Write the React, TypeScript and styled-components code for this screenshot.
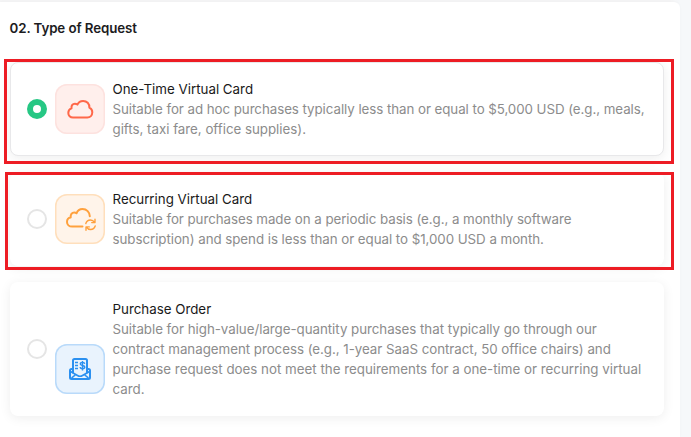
import React from "react";
import styled, { createGlobalStyle, css } from "styled-components";

const GlobalStyle = createGlobalStyle`
  * { box-sizing: border-box; }
  body {
    margin: 0;
    background: #f6f7fa;
    font-family: Inter, "Liberation Sans", sans-serif;
    overflow: hidden;
  }
`;

const Page = styled.div`
  height: 437px;
  padding: 2px 11px 0 0;
  background: linear-gradient(to right, #f4f4f5 0 670px, #f6f8fa 680px);
`;

const Panel = styled.main`
  height: 435px;
  padding: 16px 16px 0 9.5px;
  background: #fff;
  border-top-right-radius: 6px;
  box-shadow: 0 0 3px rgba(0, 0, 0, 0.03);
`;

const Heading = styled.h2`
  margin: 0 0 24px;
  font-size: 13.33px;
  line-height: 20px;
  font-weight: 600;
  letter-spacing: -0.1px;
  color: #1c1c1e;
`;

const Options = styled.div`
  display: flex;
  flex-direction: column;
  gap: 16px;
  margin-left: 0.5px;
`;

const Card = styled.label<{ $selected?: boolean }>`
  position: relative;
  display: flex;
  align-items: center;
  padding: 16px;
  border: 1px solid ${(p) => (p.$selected ? "#e8e8ea" : "transparent")};
  border-radius: 8px;
  background: #fff;
  box-shadow: 0 2px 12px rgba(0, 0, 0, 0.07);
`;

const Radio = styled.span<{ $selected?: boolean }>`
  flex: none;
  width: 20px;
  height: 20px;
  border-radius: 50%;
  background: #fff;
  border: 2px solid #e5e5e5;
  ${(p) => p.$selected && css`border: 6px solid #26c784;`}
`;

type Tone = "red" | "orange" | "blue";
const tones = {
  red: { bg: "#ffefec", border: "#fde2df", ink: "#ff6849" },
  orange: { bg: "#fff4ea", border: "#ffdfbc", ink: "#ffa13d" },
  blue: { bg: "#e9f3fd", border: "#b9dafa", ink: "#2b90f0" },
};

const Tile = styled.span<{ $tone: Tone; $low?: boolean }>`
  flex: none;
  width: 50px;
  height: 50px;
  margin: ${(p) => (p.$low ? "40px" : "0")} 7.5px 0 8px;
  border-radius: 12px;
  background: ${(p) => tones[p.$tone].bg};
  box-shadow: inset 0 0 0 1.5px ${(p) => tones[p.$tone].border};
  color: ${(p) => tones[p.$tone].ink};
  svg {
    display: block;
    fill: none;
    stroke: currentColor;
    stroke-width: 2;
    stroke-linecap: round;
    stroke-linejoin: round;
  }
`;

const Copy = styled.span`
  font-size: 13.33px;
  line-height: 20px;
  white-space: nowrap;
`;

const Title = styled.span`
  display: block;
  color: #1a1a1a;
`;

const Line = styled.span<{ $tracking: number }>`
  display: block;
  letter-spacing: ${(p) => p.$tracking}px;
  color: #8c8c8c;
`;

const Highlight = styled.span<{ $inset: string }>`
  position: absolute;
  inset: ${(p) => p.$inset};
  border: 3px solid #ed1c24;
  pointer-events: none;
`;

const CloudIcon = () => (
  <svg width="50" height="50" viewBox="0 0 50 50">
    <path d="M18 33.5c-2.800 0-4.700-2-4.700-4.600 0-2.200 1.200-3.900 3.200-4.500-.3-2.900 1.200-4.700 3.400-4.700 1 0 1.800.3 2.500.9 1-2.300 3.100-3.700 5.700-3.700 3.800 0 6.400 2.800 6.300 6.800 1.700.9 2.900 2.500 2.900 4.600 0 3-2.100 5.200-5 5.200z" />
  </svg>
);

const CloudSyncIcon = () => (
  <svg width="50" height="50" viewBox="0 0 50 50">
    <path d="M27.500 32.500H17.200c-3.100 0-5.200-2-5.200-4.600 0-2.500 1.500-4.200 3.700-4.500-.4-2.800 1.200-4.900 3.500-4.900.9 0 1.700.3 2.300.8 1-2.600 3.100-4.200 6-4.200 4.200 0 7.200 3.100 7.300 7.200" />
    <g strokeWidth="1.4">
      <path d="M30.800 29.500c.7-2.100 2.400-3.500 4.600-3.500 1.700 0 3.200.9 4.100 2.400M40 25.300v3.300h-3.300" />
      <path d="M40.200 32c-.7 2.100-2.400 3.500-4.600 3.500-1.700 0-3.200-.9-4.100-2.400M31 36.200v-3.300h3.300" />
    </g>
  </svg>
);

const InvoiceIcon = () => (
  <svg width="50" height="50" viewBox="0 0 50 50">
    <path d="M18 28.500v-12q0-1.500 1.500-1.500h11q1.500 0 1.500 1.500V28.500M18 25h-1.500q-1.500 0-1.500 1.500v7q0 1.500 1.500 1.500h17q1.500 0 1.500-1.500v-7q0-1.500-1.500-1.500H32" />
    <path strokeWidth="1.6" d="M15.500 27.500l7 4q2.500 1.500 5 0l7-4M17 33.700l3.200-2.700M33 33.700l-3.200-2.700" />
    <g strokeWidth="1.4" strokeLinecap="butt">
      <path d="M20 18.500h3M20 21.500h3M20 24.500h3" />
      <path d="M29.700 19.900c-.1-1-.9-1.500-2.200-1.500-1.300 0-2.200.6-2.200 1.600 0 2.100 4.500.9 4.500 3.100 0 1-.9 1.600-2.300 1.600s-2.300-.6-2.300-1.600M27.500 17v9.500" />
    </g>
  </svg>
);

interface Option {
  title: string;
  lines: [text: string, tracking: number][];
  tone: Tone;
  Icon: React.FC;
  selected?: boolean;
  low?: boolean;
  highlight?: string;
}

const options: Option[] = [
  {
    title: "One-Time Virtual Card",
    lines: [
      ["Suitable for ad hoc purchases typically less than or equal to $5,000 USD (e.g., meals,", -0.06],
      ["gifts, taxi fare, office supplies).", -0.02],
    ],
    tone: "red",
    Icon: CloudIcon,
    selected: true,
    highlight: "-4px -11px -9px -7px",
  },
  {
    title: "Recurring Virtual Card",
    lines: [
      ["Suitable for purchases made on a periodic basis (e.g., a monthly software", -0.06],
      ["subscription) and spend is less than or equal to $1,000 USD a month.", -0.05],
    ],
    tone: "orange",
    Icon: CloudSyncIcon,
    highlight: "-1px -11px -5px -6px",
  },
  {
    title: "Purchase Order",
    lines: [
      ["Suitable for high-value/large-quantity purchases that typically go through our", -0.04],
      ["contract management process (e.g., 1-year SaaS contract, 50 office chairs) and", -0.035],
      ["purchase request does not meet the requirements for a one-time or recurring virtual", 0],
      ["card.", 0],
    ],
    tone: "blue",
    Icon: InvoiceIcon,
    low: true,
  },
];

export default function App() {
  return (
    <Page>
      <GlobalStyle />
      <Panel>
        <Heading>02. Type of Request</Heading>
        <Options>
          {options.map(({ title, lines, tone, Icon, selected, low, highlight }) => (
            <Card key={title} $selected={selected}>
              <Radio $selected={selected} />
              <Tile $tone={tone} $low={low}>
                <Icon />
              </Tile>
              <Copy>
                <Title>{title}</Title>
                {lines.map(([text, tracking]) => (
                  <Line key={text} $tracking={tracking}>{text}</Line>
                ))}
              </Copy>
              {highlight && <Highlight $inset={highlight} />}
            </Card>
          ))}
        </Options>
      </Panel>
    </Page>
  );
}
